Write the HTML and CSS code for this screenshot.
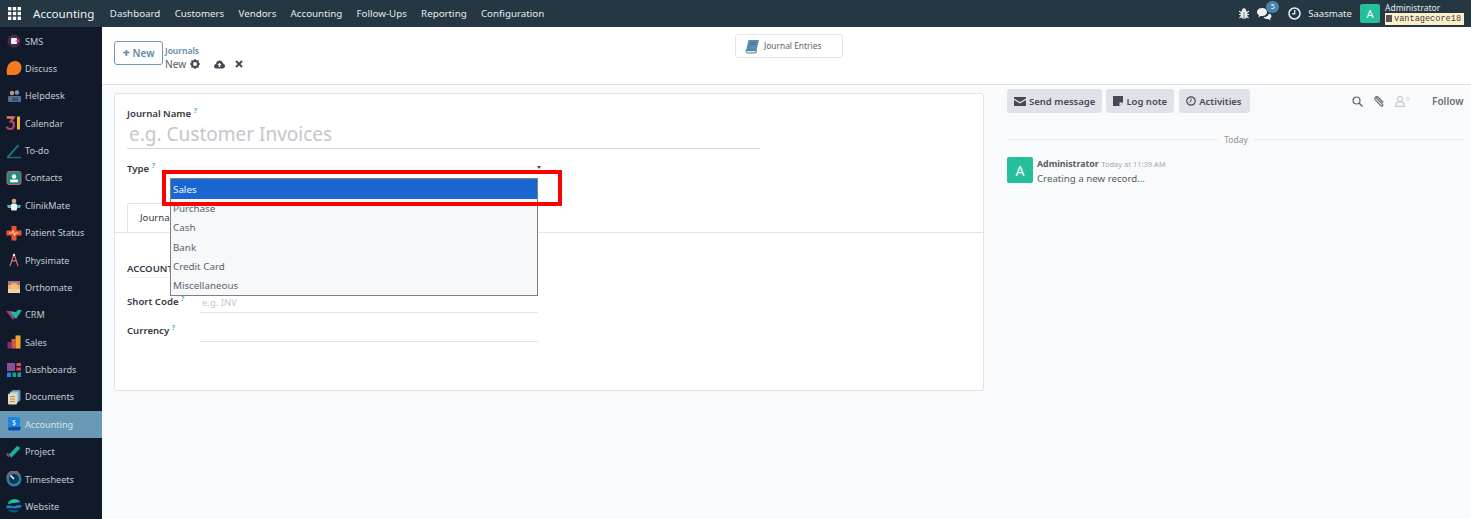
FILE: index.html
```html
<!DOCTYPE html>
<html lang="en">
<head>
<meta charset="utf-8">
<title>Journals</title>
<link rel="stylesheet" href="styles.css">
</head>
<body>
<header class="topbar">
  <svg class="grid-icon" width="13" height="13" viewBox="0 0 13 13"><g fill="#fff"><rect width="3.4" height="3.4"/><rect x="4.8" width="3.4" height="3.4"/><rect x="9.6" width="3.4" height="3.4"/><rect y="4.8" width="3.4" height="3.4"/><rect x="4.8" y="4.8" width="3.4" height="3.4"/><rect x="9.6" y="4.8" width="3.4" height="3.4"/><rect y="9.6" width="3.4" height="3.4"/><rect x="4.8" y="9.6" width="3.4" height="3.4"/><rect x="9.6" y="9.6" width="3.4" height="3.4"/></g></svg>
  <span class="brand">Accounting</span>
  <nav class="menu"><span>Dashboard</span><span>Customers</span><span>Vendors</span><span>Accounting</span><span>Follow-Ups</span><span>Reporting</span><span>Configuration</span></nav>
  <div class="systray">
    <svg class="bug" width="10" height="11" viewBox="0 0 10 11"><g fill="#e8ebee"><ellipse cx="5" cy="6.500" rx="3.400" ry="4.200"/><circle cx="5" cy="2.200" r="2"/><path d="M0 3l2 1.500M10 3L8 4.500M0 6.500h2M10 6.500H8M0.500 10L2 8.500M9.500 10L8 8.500" stroke="#e8ebee" stroke-width="1.100"/></g><path d="M5 4v6.500" stroke="#243742" stroke-width=".6"/></svg>
    <span class="chat"><svg width="15" height="14" viewBox="0 0 15 14"><path d="M0 5c0-2.500 2.300-4 5-4s5 1.500 5 4-2.300 4-5 4c-.6 0-1 0-1.500-.1L1.500 10.500l.4-2.500C.7 7.300 0 6.300 0 5z" fill="#eef0f2"/><path d="M6.500 10.200c2.500 0 5-1.200 5.300-3.700C13.500 7 14.500 8 14.500 9.300c0 1-.6 1.700-1.400 2.200l.3 2-2-1.500c-2 .2-4-.4-4.900-1.800z" fill="#eef0f2"/></svg><b class="badge">5</b></span>
    <svg class="clock" width="13" height="13" viewBox="0 0 13 13"><circle cx="6.500" cy="6.500" r="5.500" fill="none" stroke="#eef0f2" stroke-width="1.500"/><path d="M6.700 3v3.800H4" fill="none" stroke="#eef0f2" stroke-width="1.300"/></svg>
    <span class="company">Saasmate</span>
    <span class="avatar top-avatar">A</span>
    <div class="user"><span class="user-name">Administrator</span><span class="db"><i class="db-icon"></i>vantagecore18</span></div>
  </div>
</header>
<div class="body">
  <aside class="sidebar">
    <div class="app"><svg class="ico" viewBox="0 0 16 16"><circle cx="8" cy="8" r="6.500" fill="#4a2a4a"/><rect x="5" y="5" width="6" height="6" rx="1" fill="#eef0f2"/><path d="M9 8l4-1.500v3z" fill="#e8354a"/></svg><span>SMS</span></div>
    <div class="app"><svg class="ico" viewBox="0 0 16 16"><path d="M9 1c3.500 0 6.500 2.500 6.500 6.500S12.500 15 8.500 15H1.200C.6 13 .500 11.500.8 9.500 1.500 4.500 4.500 1 9 1z" fill="#f47a1f"/></svg><span>Discuss</span></div>
    <div class="app"><svg class="ico" viewBox="0 0 16 16"><rect x="2" y="8" width="13" height="6" rx="1" fill="#5a6d8f"/><circle cx="6" cy="5" r="2.200" fill="#c98f7a"/><circle cx="11" cy="4.500" r="2.200" fill="#7a93b8"/><rect x="6" y="9.500" width="6" height="3.500" fill="#3d4f78"/></svg><span>Helpdesk</span></div>
    <div class="app"><svg class="ico" viewBox="0 0 16 16"><path d="M.8 2.500h7L4.800 6.300C7 6.300 8 8 8 10s-1.500 4-3.800 4-3.200-1-3.700-2.500" fill="none" stroke="#b0486e" stroke-width="2.200"/><path d="M.8 2.500h7" stroke="#d98a4a" stroke-width="2.200"/><path d="M12.500 1.500v13" stroke="#f2b632" stroke-width="3"/></svg><span>Calendar</span></div>
    <div class="app"><svg class="ico" viewBox="0 0 16 16"><path d="M1 14.500h14" stroke="#1d6e78" stroke-width="1.500"/><path d="M1.500 14.500L12.500 2" stroke="#14848a" stroke-width="1.800"/></svg><span>To-do</span></div>
    <div class="app"><svg class="ico" viewBox="0 0 16 16"><rect x="1" y="1.500" width="14" height="13" rx="2" fill="#1c8d7d" stroke="#c9605c"/><circle cx="8" cy="6.500" r="2.200" fill="#fff"/><rect x="4" y="9.500" width="8" height="2.800" rx="1" fill="#fff"/></svg><span>Contacts</span></div>
    <div class="app"><svg class="ico" viewBox="0 0 16 16"><circle cx="8" cy="4" r="2.300" fill="#d7a68c"/><rect x="5" y="6.500" width="6" height="7" rx="1.500" fill="#eef2f5"/><path d="M1 8l4 0v3H2zM15 8h-4v3h3z" fill="#5fb6a8"/></svg><span>ClinikMate</span></div>
    <div class="app"><svg class="ico" viewBox="0 0 16 16"><path d="M5.500 1h5v4.500H15.500v5h-5V15.500h-5v-5H.500v-5h5z" fill="#e8562e"/><path d="M3 8h3l1-2.500 1.500 5 1-2.500h3" fill="none" stroke="#fbe3d8" stroke-width=".8"/></svg><span>Patient Status</span></div>
    <div class="app"><svg class="ico" viewBox="0 0 16 16"><path d="M8 2L4 14M8 2l4 12M5.500 8.500L11 9" fill="none" stroke="#c76a6a" stroke-width="1.300"/><circle cx="8" cy="3" r="1.200" fill="#eef0f2"/></svg><span>Physimate</span></div>
    <div class="app"><svg class="ico" viewBox="0 0 16 16"><rect x="2" y="2" width="12" height="4" fill="#b56f8e"/><rect x="2" y="6" width="12" height="4" fill="#f1b451"/><rect x="2" y="10" width="12" height="4" fill="#e9d6c0"/><rect x="5" y="4" width="6" height="8" fill="#f8c978" opacity=".7"/></svg><span>Orthomate</span></div>
    <div class="app"><svg class="ico" viewBox="0 0 16 16"><path d="M0 4h7l3 4-3 5z" fill="#d7428f" opacity=".75"/><path d="M9 11L4 5h6l2-2h4L10 12z" fill="#16b8a6"/></svg><span>CRM</span></div>
    <div class="app"><svg class="ico" viewBox="0 0 16 16"><rect x="1.500" y="8" width="4" height="6.500" fill="#8a2f6b"/><rect x="5.500" y="5" width="4" height="9.500" fill="#d9564e"/><rect x="9.500" y="1.500" width="5" height="13" fill="#f6a330"/></svg><span>Sales</span></div>
    <div class="app"><svg class="ico" viewBox="0 0 16 16"><rect x="1" y="1" width="8" height="8" fill="#8b4d93"/><rect x="10.500" y="1" width="4.500" height="3" fill="#e3495a"/><rect x="10.500" y="5.500" width="4.500" height="3" fill="#e3495a"/><rect x="1" y="10.500" width="4" height="4.500" fill="#1b86e3"/><rect x="6.500" y="10.500" width="3.500" height="4.500" fill="#1a9e8d"/><rect x="11.500" y="10.500" width="3.500" height="4.500" fill="#1a9e8d"/></svg><span>Dashboards</span></div>
    <div class="app"><svg class="ico" viewBox="0 0 16 16"><rect x="6" y="1" width="8.500" height="11" rx="1" fill="#5d93b5"/><rect x="4" y="2.500" width="8.500" height="11" rx="1" fill="#a9c8db"/><rect x="2" y="4.500" width="9" height="11" rx="1" fill="#ecd9b5"/><path d="M4 7.500h5M4 10h5M4 12.500h5" stroke="#a68f66"/></svg><span>Documents</span></div>
    <div class="app active"><svg class="ico" viewBox="0 0 16 16"><path d="M2 1h12v10H5c-1.500 0-3 .5-3 2z" fill="#1f86e0"/><path d="M2 13c0-1.300 1.500-2 3-2h10l-1 3.500H4C3 14.500 2 14 2 13z" fill="#0f4fa8"/><text x="8" y="9" class="dollar">$</text></svg><span>Accounting</span></div>
    <div class="app"><svg class="ico" viewBox="0 0 16 16"><path d="M1.500 8.500l3 2.500-2 2.500-2.500-3z" fill="#8a3f7c"/><path d="M5 14L3.500 10 11 2l3.500 2z" fill="#1ab3a3"/></svg><span>Project</span></div>
    <div class="app"><svg class="ico" viewBox="0 0 16 16"><circle cx="8" cy="8" r="7.500" fill="#2f7da8"/><path d="M.5 8A7.500 7.500 0 0 1 15 5.500 7 7 0 0 0 .5 8z" fill="#d9534f"/><circle cx="8" cy="8" r="5" fill="#0f3550"/><path d="M8 8L4.500 4.500" stroke="#fff" stroke-width="1.500"/></svg><span>Timesheets</span></div>
    <div class="app"><svg class="ico" viewBox="0 0 16 16"><path d="M1.500 6A7.500 7.500 0 0 1 14.500 4z" fill="#1cc2a5"/><path d="M.5 8c3-2 5 1 8 0s4-1 7-1c0 1-.1 1.500-.3 2.500-3 0-5 1.500-7.700 1S2 10 .9 10.500C.6 9.500.500 9 .5 8z" fill="#1b7fc4"/><path d="M2 12c3-1 4 .5 7 .3 2-.1 3-1 4.500-.8A7.500 7.500 0 0 1 2 12z" fill="#16578f"/></svg><span>Website</span></div>
  </aside>
  <main class="main">
    <div class="control">
      <button class="new-btn"><span class="plus">+</span> New</button>
      <div class="crumbs">
        <span class="crumb-link">Journals</span>
        <div class="crumb-row">
          <span class="crumb-new">New</span>
          <svg class="gear" width="10" height="10" viewBox="0 0 10 10"><circle cx="5" cy="5" r="3" fill="none" stroke="#444b54" stroke-width="2"/><path d="M5 0v2M5 8v2M0 5h2M8 5h2M1.500 1.500l1.400 1.400M7.100 7.100l1.400 1.400M1.500 8.500l1.400-1.400M7.100 2.900l1.400-1.400" stroke="#444b54" stroke-width="1.500"/></svg>
          <svg class="cloud" width="11" height="9" viewBox="0 0 11 9"><path d="M2.500 8.500C1 8.500 0 7.500 0 6.200s1-2.200 2-2.300C2.300 2 3.800.5 5.500.5S8.700 1.700 9 3.500c1.200.300 2 1.300 2 2.600 0 1.400-1 2.400-2.500 2.400z" fill="#444b54"/><path d="M5.500 2.800L3.500 5h1.300v2h1.400V5h1.300z" fill="#fff"/></svg>
          <svg class="cross" width="8" height="8" viewBox="0 0 8 8"><path d="M1 1l6 6M7 1L1 7" stroke="#444b54" stroke-width="2"/></svg>
        </div>
      </div>
      <div class="smart"><svg width="16" height="15" viewBox="0 0 16 15"><path d="M4.500 1H15l-2.500 10.500H2z" fill="#5a8eb0"/><path d="M2 11.500C1.500 13 2 14 3.500 14H12l.5-2.500H2z" fill="#dbe8f0" stroke="#35688a" stroke-width=".8"/><path d="M6.500 3.500h6M6 5.500h6" stroke="#2f5f80" stroke-width=".6"/></svg><span>Journal Entries</span></div>
    </div>
    <div class="content">
      <section class="sheet">
        <div class="sheet-top">
          <label class="lbl">Journal Name <sup class="help">?</sup></label>
          <div class="name-input">e.g. Customer Invoices</div>
          <div class="type-row">
            <label class="lbl">Type <sup class="help">?</sup></label>
            <div class="type-input"><i class="caret"></i></div>
          </div>
        </div>
        <div class="tabs"><span class="tab">Journal Entries</span></div>
        <div class="page">
          <div class="section-title">ACCOUNTING INFORMATION</div>
          <div class="field-row field-short"><label class="lbl">Short Code <sup class="help">?</sup></label><div class="val ph">e.g. INV</div></div>
          <div class="field-row"><label class="lbl">Currency <sup class="help">?</sup></label><div class="val"></div></div>
        </div>
        <ul class="dropdown">
          <li class="sel">Sales</li><li>Purchase</li><li>Cash</li><li>Bank</li><li>Credit Card</li><li>Miscellaneous</li>
        </ul>
        <div class="redbox"></div>
      </section>
      <section class="chatter">
        <div class="chat-bar">
          <button class="cbtn"><svg width="12" height="9" viewBox="0 0 12 9"><path d="M0 0h12v1.500L6 5 0 1.500zM0 3l6 3.500L12 3v6H0z" fill="#444b54"/></svg>Send message</button>
          <button class="cbtn"><svg width="10" height="10" viewBox="0 0 10 10"><path d="M0 0h10v6.500L6.500 10H0z" fill="#444b54"/><path d="M6.500 10V6.500H10z" fill="#dfe2e6"/></svg>Log note</button>
          <button class="cbtn cbtn-last"><svg width="10" height="10" viewBox="0 0 10 10"><circle cx="5" cy="5" r="4.200" fill="none" stroke="#444b54" stroke-width="1.200"/><path d="M5 5L3.500 6.500M5 5V2.500" stroke="#444b54"/></svg>Activities</button>
          <div class="chat-tools">
            <svg width="11" height="11" viewBox="0 0 11 11"><circle cx="4.500" cy="4.500" r="3.500" fill="none" stroke="#5f666e" stroke-width="1.200"/><path d="M7 7l3.500 3.500" stroke="#5f666e" stroke-width="1.400"/></svg>
            <svg class="clip" width="11" height="12" viewBox="0 0 11 12"><path d="M2 2.500l6.500 6.800c1 1.100-.5 2.500-1.500 1.500L1.300 4.800C-.3 3 2.300.3 4 2l5.300 5.500" fill="none" stroke="#5f666e" stroke-width="1.100"/></svg>
            <span class="fol"><svg width="10" height="11" viewBox="0 0 10 11"><circle cx="5" cy="3" r="2.500" fill="none" stroke="#c2c6cb" stroke-width="1.100"/><path d="M.6 10.400V8.500C.6 7 2.300 6 5 6s4.400 1 4.400 2.500v1.900z" fill="none" stroke="#c2c6cb" stroke-width="1.100"/></svg><sup>0</sup></span>
            <span class="follow">Follow</span>
          </div>
        </div>
        <div class="today"><span>Today</span></div>
        <div class="msg">
          <span class="avatar msg-avatar">A</span>
          <div class="msg-body">
            <div><b class="msg-author">Administrator</b> <span class="msg-time">Today at 11:39 AM</span></div>
            <div class="msg-text">Creating a new record...</div>
          </div>
        </div>
      </section>
    </div>
  </main>
</div>
</body>
</html>
```
FILE: styles.css
```css
* { box-sizing: border-box; }
html, body { margin: 0; height: 519px; overflow: hidden; }
body { font-family: "Noto Sans", "Open Sans", sans-serif; font-size: 10px; color: #444b54; background: #f9fafb; display: flex; flex-direction: column; }

.topbar { height: 27px; flex: none; background: #243742; color: #e7eaec; display: flex; align-items: center; padding: 0 7px 0 8px; }
.grid-icon { flex: none; }
.brand { font-size: 11.600px; margin-left: 12px; color: #f0f2f3; }
.menu { display: flex; gap: 14.300px; margin-left: 15.500px; font-size: 9.750px; }
.systray { margin-left: auto; display: flex; align-items: center; height: 27px; }
.bug { margin-right: 8px; }
.chat { position: relative; width: 22px; height: 16px; display: flex; align-items: center; margin-right: 9px; }
.badge { position: absolute; left: 9px; top: -5px; width: 13px; height: 12px; border-radius: 7px; background: #4d83a6; color: #fff; font-size: 7px; font-weight: 400; text-align: center; line-height: 12px; }
.clock { margin-right: 7px; }
.company { font-size: 9.600px; margin-right: 8px; }
.avatar { display: flex; align-items: center; justify-content: center; background: #26bf9c; color: #fff; border-radius: 2px; flex: none; }
.top-avatar { width: 20px; height: 19px; font-size: 11px; margin-right: 5px; }
.user { display: flex; flex-direction: column; width: 79px; padding-top: 1px; }
.user-name { font-size: 8.500px; line-height: 8px; height: 9px; }
.db { display: flex; align-items: center; gap: 2px; background: #fdf0c8; color: #3c4046; font-family: "Liberation Mono", monospace; font-size: 8.600px; height: 12px; line-height: 12px; padding-left: 1px; }
.db-icon { width: 6px; height: 7px; background: #555; flex: none; }

.body { flex: 1; display: flex; min-height: 0; }
.sidebar { width: 102px; flex: none; background: #111a2b; padding-top: 0.400px; display: flex; flex-direction: column; color: #c4c9cf; overflow: hidden; }
.app { height: 27.380px; flex: none; display: flex; align-items: center; font-size: 9.100px; padding-left: 6px; gap: 3px; }
.app .ico { width: 16px; height: 16px; flex: none; }
.app.active { background: #6a99b5; color: #d5e1e8; }
.dollar { fill: #fff; font-size: 7px; text-anchor: middle; font-family: "Noto Sans", sans-serif; }

.main { flex: 1; min-width: 0; display: flex; flex-direction: column; }
.control { height: 58px; flex: none; background: #fff; border-bottom: 1px solid #dfe3e8; display: flex; align-items: flex-start; padding: 14px 0 0 12px; position: relative; }
.new-btn { width: 49px; height: 24px; border: 1px solid #6f99b2; background: #fff; border-radius: 3px; color: #5e8aa6; font: 600 10px "Noto Sans", sans-serif; padding: 0; margin: 0; }
.plus { font-size: 13px; font-weight: 800; line-height: 10px; }
.crumbs { margin-left: 2px; margin-top: 4px; display: flex; flex-direction: column; }
.crumb-link { font-size: 8.500px; font-weight: 600; color: #5e8aa6; line-height: 11px; }
.crumb-row { display: flex; align-items: center; height: 14px; margin-top: 1px; font-size: 10.200px; }
.crumb-new { color: #555c64; }
.gear { margin-left: 4px; }
.cloud { margin-left: 14px; }
.cross { margin-left: 10px; }
.smart { position: absolute; left: 633px; top: 7px; width: 108px; height: 24px; background: #fff; border: 1px solid #e2e5e9; border-radius: 3px; display: flex; align-items: center; gap: 4px; padding-left: 8px; font-size: 8.400px; color: #5b636b; }
.smart span { position: relative; top: -1px; }

.content { flex: 1; display: flex; align-items: flex-start; padding: 8px 8px 0 12px; gap: 23px; min-height: 0; }
.sheet { width: 870px; height: 298px; flex: none; background: #fff; border: 1px solid #dfe3e8; border-radius: 3px; position: relative; display: flex; flex-direction: column; }
.sheet-top { padding: 12px 12px 0; height: 110px; }
.lbl { font-size: 9.600px; font-weight: 600; color: #333a42; line-height: 14px; }
.help { color: #3aa6c4; font-size: 7px; font-weight: 600; vertical-align: 4px; line-height: 0; }
.name-input { width: 633px; height: 25px; margin-top: 3px; border-bottom: 1px solid #d5d8dc; font-size: 19px; line-height: 21px; padding-left: 2px; color: #c3c7cc; }
.type-row { display: flex; align-items: flex-start; margin-top: 13px; }
.type-input { flex: none; width: 372px; margin-left: 14px; height: 10px; position: relative; }
.caret { position: absolute; right: 0; top: 4px; border: 2.500px solid transparent; border-top: 3px solid #444b54; border-bottom: 0; }
.tabs { height: 29px; flex: none; border-bottom: 1px solid #dfe3e8; padding-left: 12px; display: flex; align-items: flex-end; margin-bottom: -1px; }
.tab { height: 29px; width: 120px; border: 1px solid #dfe3e8; border-bottom: 1px solid #fff; padding: 7px 0 0 12px; border-radius: 3px 3px 0 0; font-size: 9.600px; color: #333a42; overflow: hidden; white-space: nowrap; }
.page { padding: 30px 12px 0; }
.section-title { font-size: 9.600px; font-weight: 600; color: #333a42; line-height: 14px; height: 16px; width: 411px; border-bottom: 1px solid #eceef0; }
.field-row { display: flex; align-items: flex-start; width: 411px; height: 29px; }
.field-short { margin-top: 17px; }
.field-row .lbl { width: 73px; flex: none; }
.val { flex: 1; height: 18px; border-bottom: 1px solid #e0e3e6; padding-left: 2px; line-height: 16px; font-size: 9.500px; }
.ph { color: #c3c7cc; }

.dropdown { position: absolute; left: 55px; top: 84px; width: 368px; height: 118px; margin: 0; padding: 0; list-style: none; background: #f7f8fa; border: 1px solid #7d8186; font-size: 9.800px; color: #5b636b; box-shadow: inset 0 1px 0 #888; }
.dropdown li { height: 19.300px; line-height: 19.300px; padding-left: 2px; }
.dropdown .sel { background: #1a67d2; color: #f4f7fb; height: 20px; line-height: 21px; }
.redbox { position: absolute; left: 47px; top: 76px; width: 400px; height: 36px; border: 4px solid #fd0000; }

.chatter { flex: 1; min-width: 0; display: flex; flex-direction: column; margin-top: -4px; }
.chat-bar { display: flex; gap: 4px; height: 24px; align-items: center; }
.cbtn { height: 24px; border: 0; border-radius: 3px; background: #dfe2e6; color: #444b54; font: 600 9.500px "Noto Sans", sans-serif; display: flex; align-items: center; gap: 3px; padding: 0 7px; }
.cbtn-last { margin-left: 1px; padding-right: 8px; }
.chat-tools { margin-left: auto; display: flex; align-items: center; color: #6a7077; }
.clip { margin-left: 11px; }
.fol { margin-left: 10px; display: flex; color: #c2c6cb; font-size: 7px; }
.fol sup { line-height: 6px; margin-left: 1px; width: 4px; }
.follow { margin-left: 22px; font-weight: 600; font-size: 10px; width: 31px; }
.today { display: flex; align-items: center; gap: 6px; margin: 20px 0 0 2px; font-size: 8.500px; color: #8d939a; height: 12px; }
.today::before { content: ""; flex: 1; height: 1px; background: #e7e9ec; }
.today::after { content: ""; flex: 1; height: 1px; background: #e7e9ec; }
.msg { display: flex; gap: 4px; margin-top: 11px; }
.msg-avatar { width: 26px; height: 26px; font-size: 14px; margin-top: 1px; }
.msg-body { display: flex; flex-direction: column; }
.msg-author { font-size: 8.800px; font-weight: 700; color: #555c64; }
.msg-time { font-size: 7.500px; color: #a4a9af; }
.msg-text { font-size: 9.700px; color: #555c64; line-height: 15px; margin-top: 1px; }
```
